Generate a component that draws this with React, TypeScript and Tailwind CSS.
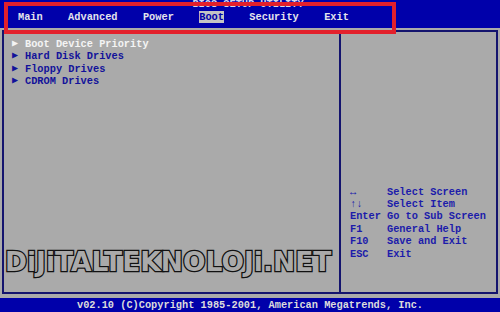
import React from "react";

const tabs = ["Main", "Advanced", "Power", "Boot", "Security", "Exit"];

const items = [
  { label: "Boot Device Priority", active: true },
  { label: "Hard Disk Drives", active: false },
  { label: "Floppy Drives", active: false },
  { label: "CDROM Drives", active: false },
];

const help = [
  ["↔", "Select Screen"],
  ["↑↓", "Select Item"],
  ["Enter", "Go to Sub Screen"],
  ["F1", "General Help"],
  ["F10", "Save and Exit"],
  ["ESC", "Exit"],
];

const App = () => {
  return (
    <div className="relative w-[500px] h-[312px] overflow-hidden bg-[#aaaaaa] flex flex-col font-['Liberation_Mono','DejaVu_Sans_Mono',monospace] text-[10.3px] font-bold leading-[12.4px]">
      {/* title bar */}
      <div className="h-[28px] bg-[#0000aa] flex flex-col">
        <div className="text-center text-[#d8d8e8] -mt-[2px] h-[12px] pr-[4px]">
          BIOS SETUP UTILITY
        </div>
        <div className="flex items-center pl-[18px] h-[12px] mt-[1px]">
          {tabs.map((t) => (
            <span
              key={t}
              className={
                t === "Boot"
                  ? "mr-[25.4px] bg-[#c4c4c4] text-[#0000aa]"
                  : "mr-[25.4px] text-[#e4e4ec]"
              }
            >
              {t}
            </span>
          ))}
        </div>
      </div>

      {/* frame */}
      <div className="flex-1 flex mt-[2px] mb-[4px] mx-[2px] border-2 border-[#14146e]">
        <div className="w-[337px] border-r-2 border-[#14146e] pt-[6px] pl-[8px]">
          {items.map((it) => (
            <div
              key={it.label}
              className={
                "flex items-center " +
                (it.active ? "text-[#f4f4f4]" : "text-[#12129a]")
              }
            >
              <span className="w-[13px] text-[10px]">▶</span>
              <span>{it.label}</span>
            </div>
          ))}
        </div>
        <div className="flex-1 flex flex-col justify-end pb-[32px] pl-[9px] text-[#1c1caa]">
          {help.map(([k, d]) => (
            <div key={k} className="flex">
              <span className="w-[37px]">{k}</span>
              <span>{d}</span>
            </div>
          ))}
        </div>
      </div>

      {/* footer */}
      <div className="h-[14px] bg-[#0000aa] text-[#dcdcdc] text-center leading-[14px]">
        v02.10 (C)Copyright 1985-2001, American Megatrends, Inc.
      </div>

      {/* watermark */}
      <div className="absolute left-[5px] top-[246px] font-['DejaVu_Sans',sans-serif] text-[26.5px] leading-[32px] font-black text-[#aaaaaa] [-webkit-text-stroke:2.5px_#111] [paint-order:stroke_fill] whitespace-nowrap">
        DiJiTALTEKNOLOJi.NET
      </div>

      {/* red highlight box */}
      <div className="absolute left-[4px] top-[2px] w-[392px] h-[32px] border-4 border-[#e3202b]" />
    </div>
  );
};

export default App;
